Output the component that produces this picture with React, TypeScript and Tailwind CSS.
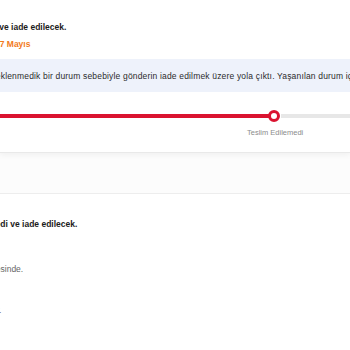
export default function App() {
  return (
    <div className="w-[350px] h-[350px] overflow-hidden bg-[#fcfcfc] font-['Liberation_Sans',Arial,sans-serif]">
      {/* Card: returned shipment */}
      <div className="bg-white border-b border-[#e9e9e9] shadow-[0_2px_6px_rgba(0,0,0,0.05)] pt-[21px] pb-[14px]">
        <p className="-ml-[116px] whitespace-nowrap text-[8.5px] leading-[12px] font-bold text-[#1b1b1b]">
          Gönderiniz teslim edilemedi ve iade edilecek.
        </p>
        <p className="-ml-[5px] mt-[5px] whitespace-nowrap text-[8.5px] leading-[12px] font-semibold text-[#f27a1a]">
          27 Mayıs
        </p>

        <div className="mt-[9px] h-[33px] bg-[#eef2fb] flex items-center">
          <p className="-ml-[10px] whitespace-nowrap text-[8.5px] leading-[12px] tracking-[0.17px] text-[#2b2b2b]">
            Beklenmedik bir durum sebebiyle gönderin iade edilmek üzere yola çıktı. Yaşanılan durum için özür dileriz.
          </p>
        </div>

        {/* Progress */}
        <div className="mt-[18px] h-[12px] flex items-center">
          <div className="w-[270px] h-[4px] bg-[#da1330]" />
          <div className="-ml-[2px] w-[12px] h-[12px] shrink-0 rounded-full border-[3px] border-[#da1330] bg-white" />
          <div className="ml-[1px] flex-1 h-[4px] bg-[#e7e7e7]" />
        </div>
        <p className="ml-[247px] mt-[6px] whitespace-nowrap text-[7.5px] leading-[10px] text-[#8c8c8c]">
          Teslim Edilemedi
        </p>
      </div>

      <div className="h-[40px]" />

      {/* Second card */}
      <div className="bg-white border-t border-[#ededed] pt-[24px] h-full">
        <p className="-ml-[105px] whitespace-nowrap text-[8.5px] leading-[12px] font-bold text-[#1b1b1b]">
          Gönderiniz teslim edilemedi ve iade edilecek.
        </p>
        <p className="-ml-[85px] mt-[33px] whitespace-nowrap text-[8.5px] leading-[12px] text-[#666666]">
          Gönderiniz kargo şubesinde.
        </p>
        <p className="-ml-[44px] mt-[29px] whitespace-nowrap text-[8.5px] leading-[12px] text-[#666666]">
          Teşekkürler.
        </p>
      </div>
    </div>
  );
}
